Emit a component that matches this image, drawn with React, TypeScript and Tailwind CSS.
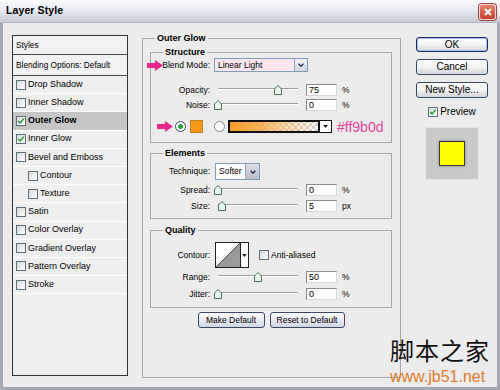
import React from "react";

type Kid = { children?: React.ReactNode };

const styleList = [
  { name: "Drop Shadow" },
  { name: "Inner Shadow" },
  { name: "Outer Glow", on: true, active: true },
  { name: "Inner Glow", on: true },
  { name: "Bevel and Emboss" },
  { name: "Contour", sub: true },
  { name: "Texture", sub: true },
  { name: "Satin" },
  { name: "Color Overlay" },
  { name: "Gradient Overlay" },
  { name: "Pattern Overlay" },
  { name: "Stroke" },
];

function Check({ on = false }: { on?: boolean }) {
  return (
    <span className="w-[10px] h-[10px] shrink-0 border border-[#5f6f7a] bg-linear-to-br from-[#d8d8d8] to-white flex items-center justify-center">
      {on && (
        <svg viewBox="0 0 10 10" className="w-[8px] h-[8px]">
          <path d="M1.5 5 L4 7.5 L8.5 2" fill="none" stroke="#1f9a2c" strokeWidth="1.8" />
        </svg>
      )}
    </span>
  );
}

function Radio({ on = false }: { on?: boolean }) {
  return (
    <span
      className={`w-[11px] h-[11px] shrink-0 rounded-full border bg-white flex items-center justify-center ${
        on ? "border-[#2f4d5a]" : "border-[#7a8a90]"
      }`}
    >
      {on && <span className="w-[5px] h-[5px] rounded-full bg-[#2aa43a]" />}
    </span>
  );
}

function PinkArrow({ className }: { className: string }) {
  return (
    <svg viewBox="0 0 16 11" className={`absolute w-[16px] h-[11px] ${className}`}>
      <path d="M0 3 H8 V0 L16 5.5 L8 11 V8 H0 Z" fill="#e8298b" />
    </svg>
  );
}

function Chevron() {
  return (
    <svg viewBox="0 0 10 10" className="w-[8px] h-[8px]">
      <path d="M2 3.5 L5 6.5 L8 3.5" fill="none" stroke="#2b3550" strokeWidth="1.8" />
    </svg>
  );
}

function Slider({ value }: { value: number }) {
  return (
    <div className="relative w-[88px] h-full">
      <div className="absolute left-[4px] right-[4px] top-[4px] h-[2px] border-t border-[#9c9c9c] border-b border-b-white" />
      <svg
        viewBox="0 0 8 10"
        className="absolute top-[1px] w-[8px] h-[10px] -translate-x-1/2"
        style={{ left: `${4 + value * 0.8}px` }}
      >
        <path d="M0.5 4 L4 0.5 L7.5 4 V9.5 H0.5 Z" fill="#e8f3ec" stroke="#4e6e5e" strokeWidth="1" />
      </svg>
    </div>
  );
}

function NumBox({ v, unit }: { v: string; unit: string }) {
  return (
    <>
      <div className="ml-[4px] w-[31px] h-[12px] bg-white border border-[#8a8a8a] border-r-[#dadada] border-b-[#dadada] text-[9px] leading-[10px] pl-[2px]">
        {v}
      </div>
      <span className="ml-[5px] text-[8.5px]">{unit}</span>
    </>
  );
}

function Row({ label, className, children }: { label: string; className: string } & Kid) {
  return (
    <div className={`relative flex items-center ${className}`}>
      <span className="w-[59px] shrink-0 text-right text-[8.5px] leading-none">{label}</span>
      <div className="ml-[4px] flex items-center h-full">{children}</div>
    </div>
  );
}

function SliderRow({ label, value, unit, className }: { label: string; value: number; unit: string; className: string }) {
  return (
    <Row label={label} className={className}>
      <Slider value={value} />
      <NumBox v={String(value)} unit={unit} />
    </Row>
  );
}

function XpButton({ className, primary, children }: { className: string; primary?: boolean } & Kid) {
  return (
    <div
      className={`rounded-[3px] border flex items-center justify-center leading-none bg-linear-to-b from-white via-[#f3f3f3] to-[#d4d6dc] ${
        primary ? "border-[#1c3168] shadow-[inset_0_0_0_1px_#a8bde8]" : "border-[#3a4866]"
      } ${className}`}
    >
      {children}
    </div>
  );
}

function GradientBar() {
  return (
    <div className="ml-[3px] flex h-[13px]">
      <svg viewBox="0 0 92 13" className="w-[92px] h-[13px]">
        <defs>
          <pattern id="chk" width="6" height="6" patternUnits="userSpaceOnUse">
            <rect width="6" height="6" fill="#ffffff" />
            <rect width="3" height="3" fill="#d0d0d0" />
            <rect x="3" y="3" width="3" height="3" fill="#d0d0d0" />
          </pattern>
          <linearGradient id="og" x1="0" x2="1" y1="0" y2="0">
            <stop offset="0" stopColor="#f49a24" stopOpacity="1" />
            <stop offset="0.35" stopColor="#f7a640" stopOpacity="0.85" />
            <stop offset="1" stopColor="#ffc070" stopOpacity="0" />
          </linearGradient>
        </defs>
        <rect width="92" height="13" fill="url(#chk)" />
        <rect width="92" height="13" fill="url(#og)" />
        <rect x="1" y="1" width="90" height="11" fill="none" stroke="#111" strokeWidth="2" />
      </svg>
      <div className="w-[12px] h-[13px] bg-white border border-[#111] border-l-0 flex items-center justify-center">
        <svg viewBox="0 0 6 4" className="w-[5px] h-[3px]">
          <path d="M0 0 H6 L3 4 Z" fill="#111" />
        </svg>
      </div>
    </div>
  );
}

export default function App() {
  return (
    <div className="relative w-[500px] h-[390px] flex flex-col font-['Liberation_Sans',Arial,sans-serif] text-black select-none">
      {/* title bar */}
      <div className="h-[23px] shrink-0 flex items-center justify-between pl-[6px] pr-[4px] bg-linear-to-b from-[#fbfbfc] via-[#e6e8ee] to-[#c7cbd6] border-b border-[#b4b8c4]">
        <span className="text-[10.5px] font-bold tracking-[0.1px]">Layer Style</span>
        <div className="w-[17px] h-[16px] mt-[2px] rounded-[3px] border border-[#f3d6d0] bg-linear-to-b from-[#e8826f] to-[#c4402c] flex items-center justify-center shadow-[0_0_0_1px_#9a4a40]">
          <svg viewBox="0 0 10 10" className="w-[10px] h-[10px]">
            <path d="M2 2 L8 8 M8 2 L2 8" stroke="#fff" strokeWidth="1.8" />
          </svg>
        </div>
      </div>

      <div className="flex-1 flex pt-[9px] pl-[9px] bg-[#ececec] border-x-[3px] border-b-[3px] border-[#a4a8b2]">
        {/* styles list */}
        <div className="mt-[3px] w-[116px] h-[341px] border border-[#333] bg-[#efefef] flex flex-col">
          <div className="h-[19px] shrink-0 flex items-center pl-[3px] text-[8.3px] border-b border-[#4a4a4a] bg-[#f2f2f2]">
            Styles
          </div>
          <div className="h-[21px] shrink-0 flex items-center pl-[3px] text-[8.3px] border-b border-[#4a4a4a] bg-[#f2f2f2]">
            Blending Options: Default
          </div>
          {styleList.map((s) => (
            <div
              key={s.name}
              className={`h-[18.2px] shrink-0 flex items-center gap-[2px] border-b border-white text-[9px] ${
                s.sub ? "pl-[15px]" : "pl-[3px]"
              } ${s.active ? "bg-[#c6c6c6] font-bold" : ""}`}
            >
              <Check on={s.on} />
              <span>{s.name}</span>
            </div>
          ))}
        </div>

        {/* main panel */}
        <div className="ml-[14px] w-[259px] flex flex-col">
          <fieldset className="h-[346px] border border-[#a8a8a8] pl-[7px] pr-[8px]">
            <legend className="ml-[5px] px-[2px] text-[9px] leading-[12px] font-bold">Outer Glow</legend>

            <fieldset className="mt-[2px] h-[97px] border border-[#a8a8a8]">
              <legend className="ml-[12px] px-[2px] text-[9px] leading-[12px] font-bold">Structure</legend>
              <Row label="Blend Mode:" className="h-[14px]">
                <PinkArrow className="left-[-4px] top-[2px]" />
                <div className="w-[94px] h-[14px] flex border border-[#7f9db9] bg-[#fce6f0]">
                  <span className="flex-1 text-[8.5px] leading-[12px] pl-[3px]">Linear Light</span>
                  <span className="w-[13px] bg-linear-to-b from-[#f0f2f6] to-[#cfd5e0] border-l border-[#9aa6ba] flex items-center justify-center">
                    <Chevron />
                  </span>
                </div>
              </Row>
              <SliderRow label="Opacity:" value={75} unit="%" className="h-[12px] mt-[12px]" />
              <SliderRow label="Noise:" value={0} unit="%" className="h-[12px] mt-[3px]" />
              <div className="relative flex items-center h-[13px] mt-[9px] pl-[24px]">
                <PinkArrow className="left-[6px] top-[1px]" />
                <Radio on />
                <span className="ml-[4px] w-[13px] h-[13px] bg-[#f4991d] border border-[#c9801a]" />
                <span className="ml-[11px]">
                  <Radio />
                </span>
                <GradientBar />
                <span className="ml-[5px] text-[14px] leading-none text-[#e0449b]">#ff9b0d</span>
              </div>
            </fieldset>

            <fieldset className="mt-[4px] h-[72px] border border-[#a8a8a8]">
              <legend className="ml-[12px] px-[2px] text-[9px] leading-[12px] font-bold">Elements</legend>
              <Row label="Technique:" className="h-[17px] mt-[4px]">
                <div className="ml-[1px] w-[45px] h-[17px] flex border border-[#7f9db9] bg-white">
                  <span className="flex-1 text-[8.5px] leading-[15px] pl-[3px]">Softer</span>
                  <span className="w-[14px] bg-linear-to-b from-[#dde0e6] to-[#b9bec8] border-l border-[#9aa6ba] flex items-center justify-center">
                    <Chevron />
                  </span>
                </div>
              </Row>
              <SliderRow label="Spread:" value={0} unit="%" className="h-[12px] mt-[4px]" />
              <SliderRow label="Size:" value={5} unit="px" className="h-[12px] mt-[4px]" />
            </fieldset>

            <fieldset className="mt-[5px] h-[84px] border border-[#a8a8a8]">
              <legend className="ml-[12px] px-[2px] text-[9px] leading-[12px] font-bold">Quality</legend>
              <Row label="Contour:" className="h-[26px] mt-[6px]">
                <div className="ml-[1px] w-[34px] h-[26px] flex border border-[#222] bg-white">
                  <svg viewBox="0 0 24 24" className="w-[24px] h-[24px]" preserveAspectRatio="none">
                    <path d="M0 24 L24 0 V24 Z" fill="#9a9a9a" />
                    <path d="M0 24 L24 0" stroke="#555" strokeWidth="1" />
                  </svg>
                  <span className="flex-1 border-l border-[#222] flex items-center justify-center">
                    <svg viewBox="0 0 6 4" className="w-[5px] h-[3px]">
                      <path d="M0 0 H6 L3 4 Z" fill="#111" />
                    </svg>
                  </span>
                </div>
                <span className="ml-[10px] flex items-center gap-[2px] text-[8.5px]">
                  <Check />
                  Anti-aliased
                </span>
              </Row>
              <SliderRow label="Range:" value={50} unit="%" className="h-[12px] mt-[3px]" />
              <SliderRow label="Jitter:" value={0} unit="%" className="h-[12px] mt-[5px]" />
            </fieldset>

            <div className="mt-[4px] flex justify-center gap-[5px] text-[8.5px]">
              <div className="w-[67px] h-[16px] rounded-[3px] border border-[#3a4866] bg-linear-to-b from-white to-[#cfd5e4] flex items-center justify-center">
                Make Default
              </div>
              <div className="w-[75px] h-[16px] rounded-[3px] border border-[#3a4866] bg-linear-to-b from-white to-[#cfd5e4] flex items-center justify-center">
                Reset to Default
              </div>
            </div>
          </fieldset>
        </div>

        {/* right column */}
        <div className="ml-[15px] mt-[5px] w-[72px] flex flex-col text-[10px]">
          <XpButton className="h-[15px]" primary>
            OK
          </XpButton>
          <XpButton className="h-[16px] mt-[7px]">Cancel</XpButton>
          <XpButton className="h-[16px] mt-[7px]">New Style...</XpButton>
          <div className="mt-[6px] flex items-center justify-center gap-[2px]">
            <Check on />
            <span>Preview</span>
          </div>
          <div className="mt-[8px] mx-auto w-[54px] h-[53px] bg-[#c9c9c9] border border-[#e2e2e2] flex items-center justify-center">
            <div className="w-[26px] h-[25px] bg-[#ffff00] border border-[#3a3a3a] shadow-[0_0_2px_#777]" />
          </div>
        </div>
      </div>

      {/* watermark */}
      <div className="absolute left-[390px] top-[337px] flex flex-col items-start">
        <span className="block h-[26px] text-[24px] leading-[26px] font-['Noto_Sans_CJK_SC',sans-serif] text-[#111] tracking-[1px]">
          脚本之家
        </span>
        <span className="block mt-[6px] h-[16px] text-[16px] leading-[16px] text-[#e27a2c]">www.jb51.net</span>
      </div>
    </div>
  );
}
